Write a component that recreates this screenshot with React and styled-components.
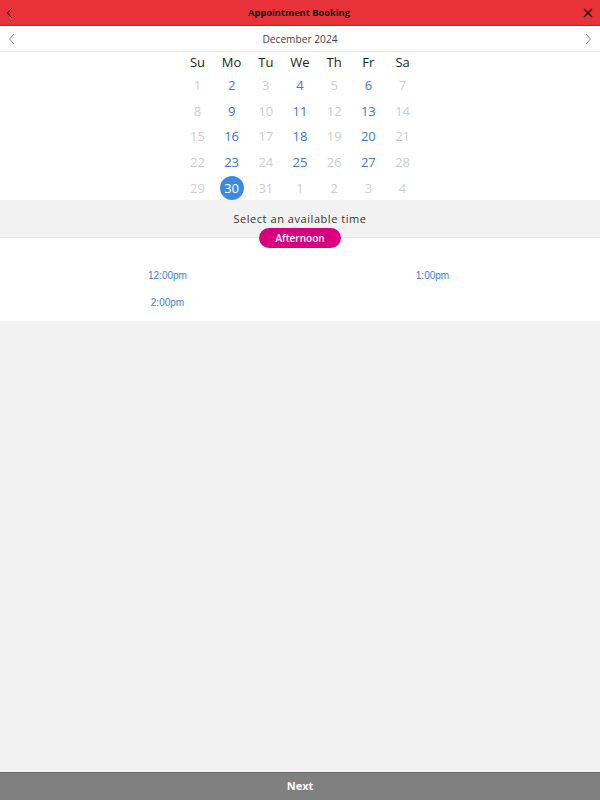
import React from 'react'
import styled, { createGlobalStyle } from 'styled-components'

const GlobalStyle = createGlobalStyle`
  html, body {
    margin: 0;
    padding: 0;
    background: #f2f2f2;
    font-family: "Open Sans", "Noto Sans", sans-serif;
  }
`

const weekDays = ['Su', 'Mo', 'Tu', 'We', 'Th', 'Fr', 'Sa']
const available = [2, 4, 6, 9, 11, 13, 16, 18, 20, 23, 25, 27, 30]

function buildWeeks() {
	const cells = []
	for (let d = 1; d <= 31; d++) cells.push({ day: d, current: true })
	for (let d = 1; d <= 4; d++) cells.push({ day: d, current: false })
	const weeks = []
	for (let i = 0; i < cells.length; i += 7) weeks.push(cells.slice(i, i + 7))
	return weeks
}

const Chevron = ({ dir = 'left', color = '#000' }) => (
	<svg width="8" height="12" viewBox="0 0 8 12">
		<path
			d={dir === 'left' ? 'M6 1 L1.5 6 L6 11' : 'M2 1 L6.5 6 L2 11'}
			fill="none"
			stroke={color}
			strokeWidth="1"
		/>
	</svg>
)

const CloseIcon = () => (
	<svg width="10" height="10" viewBox="0 0 10 10">
		<path d="M1 1 L9 9 M9 1 L1 9" stroke="#000" strokeWidth="1.1" fill="none" />
	</svg>
)

export default function App() {
	const weeks = buildWeeks()
	return (
		<Page>
			<GlobalStyle />
			<Header>
				<IconButton><Chevron dir="left" color="#111" /></IconButton>
				<Title>Appointment Booking</Title>
				<IconButton><CloseIcon /></IconButton>
			</Header>
			<MonthBar>
				<IconButton><Chevron dir="left" color="#888" /></IconButton>
				<MonthLabel>December 2024</MonthLabel>
				<IconButton><Chevron dir="right" color="#888" /></IconButton>
			</MonthBar>
			<Calendar>
				<Grid>
					{weekDays.map(w => <WeekDay key={w}>{w}</WeekDay>)}
					{weeks.map((week, wi) =>
						week.map((c, ci) => {
							const isAvail = c.current && available.includes(c.day)
							return (
								<Day key={`${wi}-${ci}`} $available={isAvail} $selected={c.current && c.day === 30}>
									<span>{c.day}</span>
								</Day>
							)
						})
					)}
				</Grid>
			</Calendar>
			<TimeHeader>
				<TimeTitle>Select an available time</TimeTitle>
				<Pill>Afternoon</Pill>
			</TimeHeader>
			<Slots>
				<Slot>12:00pm</Slot>
				<Slot>1:00pm</Slot>
				<Slot>2:00pm</Slot>
			</Slots>
			<Spacer />
			<Footer>Next</Footer>
		</Page>
	)
}

const Page = styled.div`
  display: flex;
  flex-direction: column;
  height: 100vh;
`

const Header = styled.div`
  height: 25px;
  background: #e9313a;
  border-bottom: 1px solid #c81c22;
  display: flex;
  align-items: center;
  justify-content: space-between;
  padding: 0 6px 0 4px;
`

const IconButton = styled.div`
  width: 12px;
  height: 14px;
  display: flex;
  align-items: center;
  justify-content: center;
`

const Title = styled.div`
  font-size: 9.3px;
  font-weight: 700;
  color: #111;
`

const MonthBar = styled.div`
  height: 25px;
  background: #fff;
  border-bottom: 1px solid #e6e8e8;
  display: flex;
  align-items: center;
  justify-content: space-between;
  padding: 0 6px 0 6px;
`

const MonthLabel = styled.div`
  font-size: 10.2px;
  color: #444;
`

const Calendar = styled.div`
  background: #fff;
  display: flex;
  justify-content: center;
`

const Grid = styled.div`
  display: grid;
  grid-template-columns: repeat(7, 34.2px);
  grid-template-rows: 20px;
  grid-auto-rows: 25.7px;
`

const WeekDay = styled.div`
  font-size: 13px;
  color: #222;
  display: flex;
  align-items: center;
  justify-content: center;
`

const Day = styled.div`
  display: flex;
  align-items: center;
  justify-content: center;
  font-size: 13px;
  color: ${p => (p.$selected ? '#fff' : p.$available ? '#3b78d8' : '#cbced1')};

  span {
    width: 24px;
    height: 24px;
    border-radius: 50%;
    display: flex;
    align-items: center;
    justify-content: center;
    background: ${p => (p.$selected ? '#3a8ae4' : 'transparent')};
  }
`

const TimeHeader = styled.div`
  background: #f2f2f2;
  border-bottom: 1px solid #e4e6e6;
  height: 37px;
  position: relative;
  display: flex;
  justify-content: center;
`

const TimeTitle = styled.div`
  font-size: 11px;
  letter-spacing: 0.55px;
  color: #333;
  margin-top: 11px;
`

const Pill = styled.div`
  position: absolute;
  left: 50%;
  top: 28px;
  transform: translateX(-50%);
  width: 82px;
  height: 20px;
  border-radius: 10px;
  background: #d9007f;
  color: #fff;
  font-size: 10px;
  font-weight: 600;
  display: flex;
  align-items: center;
  justify-content: center;
`

const Slots = styled.div`
  background: #fff;
  display: grid;
  grid-template-columns: 1fr 1fr;
  grid-auto-rows: 27px;
  padding: 24px 35px 5px;
`

const Slot = styled.div`
  font-family: "Liberation Sans", Arial, sans-serif;
  font-size: 10px;
  color: #3b7ddd;
  display: flex;
  align-items: center;
  justify-content: center;
`

const Spacer = styled.div`
  flex: 1;
`

const Footer = styled.div`
  height: 28px;
  background: #808080;
  border-top: 1px solid #6a6a6a;
  color: #fff;
  font-size: 11px;
  font-weight: 700;
  display: flex;
  align-items: center;
  justify-content: center;
  padding-bottom: 2px;
  box-sizing: border-box;
`
